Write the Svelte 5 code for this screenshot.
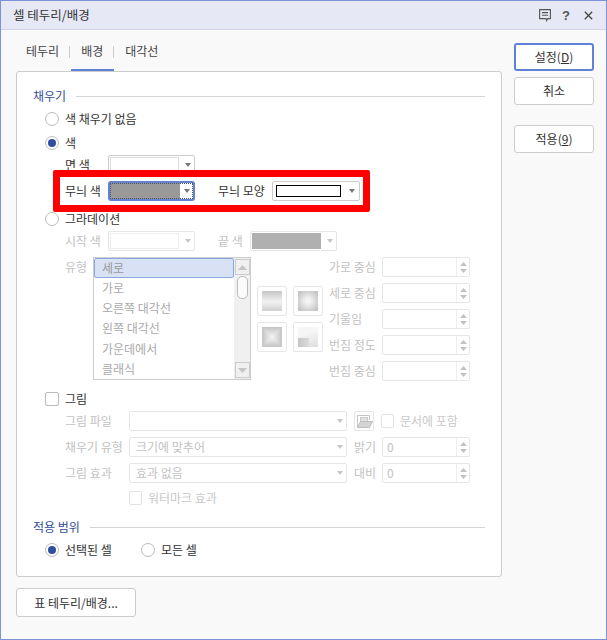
<script>
  const listItems = ['세로', '가로', '오른쪽 대각선', '왼쪽 대각선', '가운데에서', '클래식'];
  const centerFields = ['가로 중심', '세로 중심', '기울임', '번짐 정도', '번짐 중심'];
  const previews = ['p-linear', 'p-radial', 'p-square', 'p-corner'];
</script>

{#snippet arrow()}
  <svg class="arrow" width="6" height="4" viewBox="0 0 6 4"><path d="M0 0h6L3 4z" /></svg>
{/snippet}

{#snippet spinner(value)}
  <div class="spin">
    <span class="spin-value">{value}</span>
    <span class="spin-btns">
      <svg width="7" height="4" viewBox="0 0 7 4"><path d="M0 4h7L3.500 0z" /></svg>
      <svg width="7" height="4" viewBox="0 0 7 4"><path d="M0 0h7L3.500 4z" /></svg>
    </span>
  </div>
{/snippet}

<div class="dialog">
  <header class="titlebar">
    <span class="title">셀 테두리/배경</span>
    <div class="title-icons">
      <svg width="12" height="13" viewBox="0 0 12 13" fill="none" stroke="#555" stroke-width="1.100">
        <path d="M.6.600h10.800v9H8.600l-.9 2-.7-2H.6z" />
        <path d="M3 3.600h6M3 6.300h6" />
      </svg>
      <span class="help">?</span>
      <svg width="9" height="9" viewBox="0 0 9 9" fill="none" stroke="#444" stroke-width="1.300">
        <path d="M.8.800l7.400 7.400M8.200.800L.8 8.200" />
      </svg>
    </div>
  </header>

  <div class="body">
    <div class="left">
      <nav class="tabs">
        <span class="tab">테두리</span>
        <i class="tab-sep"></i>
        <span class="tab active">배경</span>
        <i class="tab-sep"></i>
        <span class="tab">대각선</span>
      </nav>

      <section class="panel">
        <div class="legend"><span>채우기</span><i></i></div>

        <label class="opt first"><span class="radio"></span>색 채우기 없음</label>
        <label class="opt color"><span class="radio on"></span>색</label>

        <div class="row face">
          <span class="lbl">면 색</span>
          <div class="combo c-color"><span class="swatch white"></span>{@render arrow()}</div>
        </div>
        <div class="row pattern">
          <span class="lbl">무늬 색</span>
          <div class="combo c-color focused"><span class="swatch gray"></span>{@render arrow()}</div>
          <span class="lbl-b">무늬 모양</span>
          <div class="combo c-shape"><span class="swatch line"></span>{@render arrow()}</div>
        </div>

        <label class="opt gradient"><span class="radio"></span>그라데이션</label>

        <div class="row dim start">
          <span class="lbl">시작 색</span>
          <div class="combo c-color"><span class="swatch white"></span>{@render arrow()}</div>
          <span class="lbl-b end-lbl">끝 색</span>
          <div class="combo c-color"><span class="swatch gray2"></span>{@render arrow()}</div>
        </div>

        <div class="grad-block dim">
          <span class="type-lbl">유형</span>
          <div class="listbox">
            <ul>
              {#each listItems as item, i}
                <li class:sel={i === 0}>{item}</li>
              {/each}
            </ul>
            <div class="scroll">
              <span class="sbtn"><svg width="9" height="5" viewBox="0 0 9 5"><path d="M0 5h9L4.500 0z" /></svg></span>
              <span class="thumb"></span>
              <span class="sbtn down"><svg width="9" height="5" viewBox="0 0 9 5"><path d="M0 0h9L4.500 5z" /></svg></span>
            </div>
          </div>
          <div class="previews">
            {#each previews as p}
              <span class="pv"><span class={p}></span></span>
            {/each}
          </div>
          <div class="fields">
            {#each centerFields as f}
              <div class="field">
                <span class="f-lbl">{f}</span>
                {@render spinner('')}
              </div>
            {/each}
          </div>
        </div>

        <label class="opt picture"><span class="check"></span>그림</label>

        <div class="row dim pic-row tight">
          <span class="lbl wide">그림 파일</span>
          <div class="combo c-wide"><span></span>{@render arrow()}</div>
          <span class="folder">
            <svg width="17" height="15" viewBox="0 0 17 15">
              <path d="M1.500 13V1.500h12V6" fill="none" stroke="#c4c4c4" />
              <rect x="4.500" y="3.500" width="7" height="4" fill="#e2e2e2" stroke="#ccc" />
              <path d="M1.500 13.500l3-6h12l-3 6z" fill="#d4d4d4" stroke="#bdbdbd" />
            </svg>
          </span>
          <span class="check small"></span>
          <span class="include">문서에 포함</span>
        </div>
        <div class="row dim pic-row">
          <span class="lbl wide">채우기 유형</span>
          <div class="combo c-wide"><span class="c-text">크기에 맞추어</span>{@render arrow()}</div>
          <span class="side-lbl">밝기</span>
          {@render spinner('0')}
        </div>
        <div class="row dim pic-row">
          <span class="lbl wide">그림 효과</span>
          <div class="combo c-wide"><span class="c-text">효과 없음</span>{@render arrow()}</div>
          <span class="side-lbl">대비</span>
          {@render spinner('0')}
        </div>
        <div class="row dim watermark">
          <span class="check small"></span>
          <span class="include">워터마크 효과</span>
        </div>

        <div class="legend scope"><span>적용 범위</span><i></i></div>
        <div class="scope-row">
          <label class="opt sel-cell"><span class="radio on"></span>선택된 셀</label>
          <label class="opt"><span class="radio"></span>모든 셀</label>
        </div>
      </section>

      <button class="btn table-btn">표 테두리/배경...</button>
    </div>

    <aside class="actions">
      <button class="btn primary">설정(<u>D</u>)</button>
      <button class="btn">취소</button>
      <button class="btn apply">적용(<u>9</u>)</button>
    </aside>
  </div>

  <div class="marker"></div>
</div>

<style>
  :global(body) {
    margin: 0;
    background: #f9f9f9;
  }
  .dialog {
    position: relative;
    box-sizing: border-box;
    width: 607px;
    height: 640px;
    border: 1px solid #7c93d4;
    background: #f9f9f9;
    font: 12px/20px "Noto Sans CJK KR", "Noto Sans", sans-serif;
    color: #333;
    overflow: hidden;
  }
  .titlebar {
    display: flex;
    align-items: center;
    justify-content: space-between;
    height: 28px;
    padding: 0 13px 0 12px;
    background: #e6e9f5;
    border-bottom: 1px solid #cfd3e6;
  }
  .title {
    font-size: 12.500px;
  }
  .title-icons {
    display: flex;
    align-items: center;
  }
  .help {
    font: bold 13px/13px "Liberation Sans", sans-serif;
    color: #555;
    margin: 0 14px 0 11px;
  }
  .body {
    display: flex;
    padding-left: 15px;
  }
  .left {
    width: 486px;
  }

  .tabs {
    display: flex;
    align-items: center;
    height: 41px;
    padding-left: 10px;
  }
  .tab {
    position: relative;
    line-height: 41px;
    height: 41px;
    color: #444;
  }
  .tab.active::after {
    content: '';
    position: absolute;
    left: -10px;
    right: -11px;
    bottom: 0;
    height: 2px;
    background: #5f81d6;
  }
  .tab-sep {
    width: 1px;
    height: 12px;
    margin: 3px 11px 0 10px;
    background: #ccc;
  }

  .panel {
    box-sizing: border-box;
    height: 506px;
    padding: 14px 16px 0 16px;
    background: #fff;
    border: 1px solid #ccc;
    border-radius: 3px;
    position: relative;
  }
  .legend {
    display: flex;
    align-items: center;
    height: 20px;
    color: #2f4f96;
    gap: 10px;
  }
  .legend i {
    flex: 1;
    height: 1px;
    background: #d4d4d4;
  }
  .legend.scope {
    margin-top: 9px;
  }

  .opt {
    display: flex;
    align-items: center;
    height: 20px;
    padding-left: 12px;
    color: #333;
  }
  .first { margin-top: 3px; }
  .color { margin-top: 4px; }
  .gradient { margin-top: 8px; }
  .picture { margin-top: 9px; }
  .radio {
    box-sizing: border-box;
    position: relative;
    width: 14px;
    height: 14px;
    margin-right: 6px;
    border: 1px solid #bbb;
    border-radius: 50%;
    background: #fff;
  }
  .radio.on::after {
    content: '';
    position: absolute;
    inset: 2px;
    border-radius: 50%;
    background: #2f4f9e;
  }
  .check {
    box-sizing: border-box;
    width: 14px;
    height: 14px;
    margin-right: 6px;
    border: 1px solid #bbb;
    border-radius: 2px;
    background: #fff;
  }
  .check.small {
    width: 13px;
    height: 14px;
    border-color: #e2e2e2;
  }

  .row {
    display: flex;
    align-items: center;
    height: 20px;
    padding-left: 32px;
  }
  .face { margin-top: 2px; }
  .pattern { margin-top: 6px; }
  .start { margin-top: 2px; }
  .lbl {
    width: 43px;
    flex: none;
  }
  .lbl.wide {
    width: 64px;
  }
  .lbl-b {
    margin-left: 23px;
    width: 54px;
    flex: none;
  }
  .end-lbl {
    width: 32px;
  }
  .dim {
    color: #c2c2c2;
  }

  .combo {
    box-sizing: border-box;
    display: flex;
    align-items: center;
    justify-content: space-between;
    flex: none;
    height: 20px;
    padding: 0 3px 0 1px;
    border: 1px solid #ccc;
    border-radius: 2px;
    background: #fff;
  }
  .c-color {
    width: 87px;
  }
  .c-shape {
    width: 88px;
    padding: 0 4px 0 3px;
  }
  .c-wide {
    width: 218px;
    padding-left: 6px;
  }
  .dim .combo,
  .dim .spin,
  .dim .folder,
  .dim .pv {
    border-color: #e6e6e6;
  }
  .focused {
    position: relative;
    border: 2px solid #5f81d6;
    border-radius: 3px;
    padding: 0 3px 0 0;
  }
  .focused::after {
    content: '';
    position: absolute;
    inset: 0;
    border: 1px dotted #555;
  }
  .swatch {
    display: block;
    height: 16px;
    width: 69px;
    box-sizing: border-box;
  }
  .swatch.white {
    border: 1px solid #ddd;
  }
  .dim .swatch.white {
    border-color: #eee;
  }
  .swatch.gray {
    background: #999;
    width: 70px;
  }
  .swatch.gray2 {
    background: #b0b0b0;
  }
  .swatch.line {
    width: 65px;
    height: 12px;
    border: 1px solid #000;
  }
  .arrow path {
    fill: #777;
  }
  .dim .arrow path {
    fill: #c6c6c6;
  }
  .c-text {
    color: #c2c2c2;
  }

  .grad-block {
    display: flex;
    height: 123px;
    margin-top: 6px;
    padding-left: 32px;
  }
  .type-lbl {
    width: 28px;
    flex: none;
  }
  .listbox {
    box-sizing: border-box;
    display: flex;
    width: 158px;
    flex: none;
    border: 1px solid #ccc;
    background: #fff;
  }
  ul {
    flex: 1;
    margin: 0;
    padding: 0;
    list-style: none;
    color: #aaa;
  }
  li {
    height: 20.200px;
    line-height: 20px;
    padding-left: 8px;
  }
  li.sel {
    box-sizing: border-box;
    height: 20px;
    line-height: 18px;
    padding-left: 7px;
    color: #999;
    background: #d9e1f5;
    border: 1px solid #8ea6df;
    border-radius: 2px;
  }
  .scroll {
    display: flex;
    flex-direction: column;
    align-items: center;
    width: 16px;
    padding-top: 1px;
    background: #f0f0f0;
  }
  .sbtn {
    box-sizing: border-box;
    display: flex;
    align-items: center;
    justify-content: center;
    width: 15px;
    height: 16px;
    border: 1px solid #ccc;
  }
  .sbtn path {
    fill: #c4c4c4;
  }
  .sbtn.down {
    margin-top: auto;
    margin-bottom: 1px;
  }
  .thumb {
    box-sizing: border-box;
    width: 11px;
    height: 23px;
    margin-top: 1px;
    border: 1px solid #bbb;
    border-radius: 5px;
    background: #fbfbfb;
  }

  .previews {
    display: grid;
    grid-template-columns: 30px 30px;
    grid-auto-rows: 30px;
    gap: 6px;
    margin: 29px 6px 0 6px;
    align-content: start;
  }
  .pv {
    box-sizing: border-box;
    display: flex;
    align-items: center;
    justify-content: center;
    border: 1px solid #e6e6e6;
    border-radius: 2px;
  }
  .pv span {
    width: 20px;
    height: 20px;
  }
  .p-linear {
    background: linear-gradient(#c6c6c6, #f2f2f2 55%, #cecece);
  }
  .p-radial {
    background: radial-gradient(circle, #f4f4f4 15%, #c4c4c4 85%);
  }
  .p-square {
    background:
      linear-gradient(90deg, #c4c4c4, #f4f4f4 50%, #c4c4c4),
      linear-gradient(#c4c4c4, #f4f4f4 50%, #c4c4c4);
    background-blend-mode: darken;
  }
  .p-corner {
    background:
      linear-gradient(90deg, #c6c6c6, #dcdcdc) 0 100% / 11px 9px no-repeat,
      linear-gradient(165deg, #f6f6f6 35%, #dedede);
  }
  .fields {
    display: flex;
    flex-direction: column;
    gap: 6px;
  }
  .field {
    display: flex;
    align-items: center;
    height: 20px;
  }
  .f-lbl {
    width: 53px;
    flex: none;
  }
  .spin {
    box-sizing: border-box;
    display: flex;
    width: 88px;
    height: 20px;
    flex: none;
    border: 1px solid #ccc;
    border-radius: 2px;
    background: #fff;
  }
  .spin-value {
    flex: 1;
    padding-left: 4px;
    line-height: 18px;
  }
  .spin-btns {
    display: flex;
    flex-direction: column;
    align-items: center;
    justify-content: space-around;
    width: 13px;
    border-left: 1px solid #eee;
    padding: 2px 0;
    box-sizing: border-box;
  }
  .spin-btns path {
    fill: #c2c2c2;
  }

  .tight { margin-top: 2px; }
  .pic-row:not(.tight) { margin-top: 6px; }
  .folder {
    box-sizing: border-box;
    display: flex;
    align-items: center;
    justify-content: center;
    width: 20px;
    height: 20px;
    margin: 0 7px;
    border: 1px solid #e6e6e6;
    border-radius: 2px;
  }
  .include {
    color: #c8c8c8;
  }
  .side-lbl {
    width: 28px;
    margin-left: 7px;
    flex: none;
  }
  .watermark {
    margin-top: 5px;
    padding-left: 96px;
  }

  .scope-row {
    display: flex;
    margin-top: 3px;
  }
  .sel-cell {
    width: 84px;
  }

  .btn {
    box-sizing: border-box;
    display: block;
    width: 80px;
    height: 28px;
    padding: 0;
    font: inherit;
    color: #333;
    background: #fff;
    border: 1px solid #ccc;
    border-radius: 3px;
  }
  .table-btn {
    width: 120px;
    height: 29px;
    margin-top: 11px;
  }
  .actions {
    display: flex;
    flex-direction: column;
    gap: 6px;
    padding: 13px 0 0 12px;
  }
  .primary {
    border: 2px solid #5f81d6;
  }
  .apply {
    margin-top: 14px;
  }

  /* red annotation drawn over the screenshot */
  .marker {
    position: absolute;
    left: 52px;
    top: 169px;
    width: 317px;
    height: 42px;
    box-sizing: border-box;
    border: 7px solid #f00;
    border-radius: 2px;
    pointer-events: none;
  }
</style>
